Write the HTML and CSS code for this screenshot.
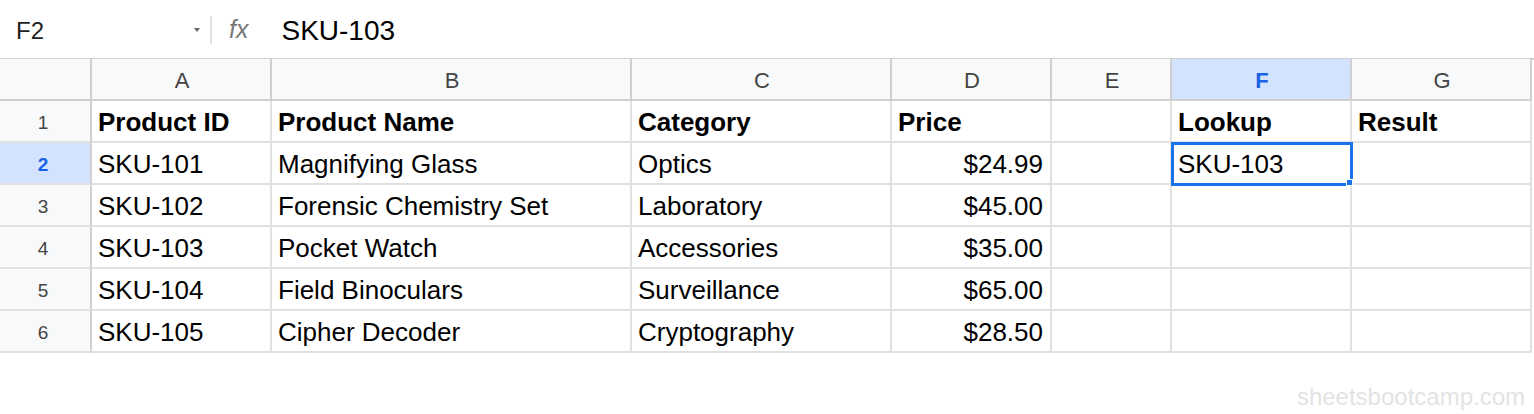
FILE: index.html
```html
<!doctype html>
<html lang="en">
    <head>
        <meta charset="UTF-8" />
        <meta name="viewport" content="width=device-width, initial-scale=1.0" />
        <title>Sheet</title>
        <link rel="stylesheet" href="styles.css">
    </head>
    <body>
        <div class="formula-bar">
            <div class="name-box">
                <span>F2</span>
                <span class="caret"></span>
            </div>
            <div class="divider"></div>
            <span class="fx">fx</span>
            <span class="formula">SKU-103</span>
        </div>

        <div class="sheet">
            <div class="corner"></div>
            <div class="col-head">A</div>
            <div class="col-head">B</div>
            <div class="col-head">C</div>
            <div class="col-head">D</div>
            <div class="col-head">E</div>
            <div class="col-head active">F</div>
            <div class="col-head">G</div>

            <div class="row-head">1</div>
            <div class="cell bold">Product ID</div>
            <div class="cell bold">Product Name</div>
            <div class="cell bold">Category</div>
            <div class="cell bold">Price</div>
            <div class="cell"></div>
            <div class="cell bold">Lookup</div>
            <div class="cell bold">Result</div>

            <div class="row-head active">2</div>
            <div class="cell">SKU-101</div>
            <div class="cell">Magnifying Glass</div>
            <div class="cell">Optics</div>
            <div class="cell num">$24.99</div>
            <div class="cell"></div>
            <div class="cell selected">SKU-103<span class="handle"></span></div>
            <div class="cell"></div>

            <div class="row-head">3</div>
            <div class="cell">SKU-102</div>
            <div class="cell">Forensic Chemistry Set</div>
            <div class="cell">Laboratory</div>
            <div class="cell num">$45.00</div>
            <div class="cell"></div>
            <div class="cell"></div>
            <div class="cell"></div>

            <div class="row-head">4</div>
            <div class="cell">SKU-103</div>
            <div class="cell">Pocket Watch</div>
            <div class="cell">Accessories</div>
            <div class="cell num">$35.00</div>
            <div class="cell"></div>
            <div class="cell"></div>
            <div class="cell"></div>

            <div class="row-head">5</div>
            <div class="cell">SKU-104</div>
            <div class="cell">Field Binoculars</div>
            <div class="cell">Surveillance</div>
            <div class="cell num">$65.00</div>
            <div class="cell"></div>
            <div class="cell"></div>
            <div class="cell"></div>

            <div class="row-head">6</div>
            <div class="cell">SKU-105</div>
            <div class="cell">Cipher Decoder</div>
            <div class="cell">Cryptography</div>
            <div class="cell num">$28.50</div>
            <div class="cell"></div>
            <div class="cell"></div>
            <div class="cell"></div>
        </div>

        <div class="watermark">sheetsbootcamp.com</div>
    </body>
</html>
```

FILE: styles.css
```css
body {
    font-family: "Liberation Sans", Arial, sans-serif;
    background-color: #ffffff;
    margin: 0;
    padding: 0;
    width: 1534px;
    height: 414px;
    overflow: hidden;
    color: #000000;
}
.formula-bar {
    display: flex;
    align-items: center;
    height: 60px;
    padding-top: 3px;
    border-bottom: 2px solid #d0d0d0;
    box-sizing: border-box;
}
.name-box {
    display: flex;
    align-items: center;
    justify-content: space-between;
    width: 184px;
    padding-left: 16px;
    padding-right: 10px;
    font-size: 24px;
    color: #222;
}
.caret {
    width: 0;
    height: 0;
    border-left: 3px solid transparent;
    border-right: 3px solid transparent;
    border-top: 4px solid #666;
    margin-top: -2px;
}
.divider {
    width: 2px;
    height: 28px;
    background-color: #e0e0e0;
    margin-top: -2px;
}
.fx {
    font-style: italic;
    font-size: 25px;
    color: #777;
    margin-left: 17px;
    margin-top: -3px;
}
.formula {
    font-size: 28px;
    margin-left: 33px;
}
.sheet {
    display: grid;
    grid-template-columns: 92px 180px 360px 260px 160px 120px 180px 180px;
    grid-auto-rows: 42px;
    width: 1532px;
    margin-top: -1px;
}
.corner,
.col-head,
.row-head {
    background-color: #f8f9fa;
    border-right: 2px solid #d0d0d0;
    border-bottom: 2px solid #d0d0d0;
    box-sizing: border-box;
    color: #444;
}
.col-head {
    display: flex;
    align-items: center;
    justify-content: center;
    font-size: 22px;
    padding-left: 2px;
    padding-top: 3px;
}
.row-head {
    display: flex;
    align-items: center;
    justify-content: center;
    font-size: 19px;
    border-bottom: 2px solid #e1e1e1;
    padding-right: 4px;
    padding-top: 3px;
}
.active {
    background-color: #d3e3fd;
    color: #1a62e6;
    font-weight: bold;
}
.cell {
    position: relative;
    display: flex;
    align-items: center;
    padding: 3px 7px 0 6px;
    font-size: 26px;
    border-right: 2px solid #e1e1e1;
    border-bottom: 2px solid #e1e1e1;
    box-sizing: border-box;
    white-space: nowrap;
}
.bold {
    font-weight: bold;
}
.num {
    justify-content: flex-end;
}
.selected {
    outline: 3px solid #1a73e8;
    outline-offset: -2px;
    z-index: 1;
}
.handle {
    position: absolute;
    right: -3px;
    bottom: -3px;
    width: 5px;
    height: 5px;
    background-color: #1a73e8;
    border: 1px solid #ffffff;
}
.watermark {
    text-align: right;
    padding-right: 9px;
    margin-top: 30px;
    font-size: 24px;
    color: #e3e3e3;
}
```
